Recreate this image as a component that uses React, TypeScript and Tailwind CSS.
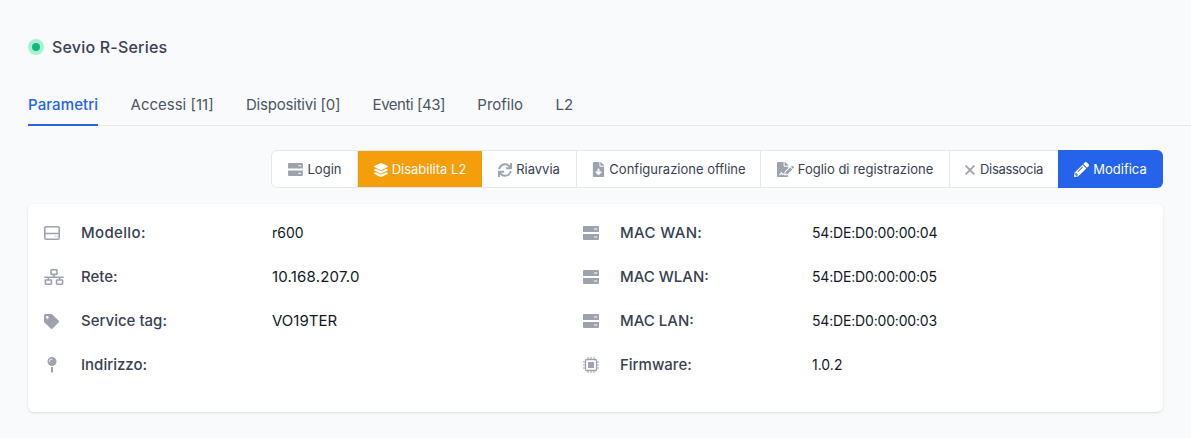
import React from 'react';
import { FaLayerGroup, FaSync, FaFileDownload, FaFileSignature, FaPencilAlt, FaTag, FaMapPin } from 'react-icons/fa';

const ServerIcon = ({ w = 16, h = 14 }: { w?: number; h?: number }) => (
  <svg width={w} height={h} viewBox="0 0 16 14" className="shrink-0 text-[#9ca3af]">
    <path fill="currentColor" d="M1 0h14a1 1 0 0 1 1 1v5H0V1a1 1 0 0 1 1-1zM0 8h16v5a1 1 0 0 1-1 1H1a1 1 0 0 1-1-1z" />
    <path fill="#fff" d="M11 2.5h3.2v1H11zM11 10.5h3.2v1H11z" />
  </svg>
);

const DriveIcon = () => (
  <svg width="16" height="14" viewBox="0 0 16 14" fill="none" className="text-[#9ca3af]">
    <rect x="0.8" y="0.8" width="14.4" height="12.4" rx="1.5" stroke="currentColor" strokeWidth="1.6" />
    <path d="M1 7.5h14" stroke="currentColor" strokeWidth="1.5" />
    <path d="M10.5 10.3h1M12.7 10.3h1" stroke="currentColor" strokeWidth="1" />
  </svg>
);

const NetworkIcon = () => (
  <svg width="20" height="16" viewBox="0 0 20 16" fill="none" stroke="currentColor" strokeWidth="1.6" className="text-[#9ca3af]">
    <rect x="7" y="0.8" width="6" height="4.6" rx="0.6" />
    <rect x="1.4" y="11" width="6" height="4.2" rx="0.6" />
    <rect x="12.6" y="11" width="6" height="4.2" rx="0.6" />
    <path d="M10 5.3v3M0.3 8.3h19.4M4.4 8.3V11M15.6 8.3V11" />
  </svg>
);

const ChipIcon = () => (
  <svg width="16" height="16" viewBox="0 0 16 16" fill="none" className="text-[#9ca3af]">
    <rect x="2.5" y="2.5" width="11" height="11" rx="1.2" stroke="currentColor" strokeWidth="1.3" />
    <rect x="5" y="5" width="6" height="6" fill="currentColor" />
    <path d="M5 0v2.5M8 0v2.5M11 0v2.5M5 13.5V16M8 13.5V16M11 13.5V16M0 5h2.5M0 8h2.5M0 11h2.5M13.5 5H16M13.5 8H16M13.5 11H16" stroke="currentColor" strokeWidth="1" />
  </svg>
);

const CloseIcon = () => (
  <svg width="10" height="10" viewBox="0 0 10 10" fill="none" stroke="currentColor" strokeWidth="1.8" className="text-[#9ca3af]">
    <path d="M0.6 0.6l8.8 8.8M9.4 0.6L0.6 9.4" />
  </svg>
);

const tabs = [
  { label: 'Parametri', cls: 'font-medium tracking-[0.1px] text-[#2563eb] border-b-2 border-[#2563eb]' },
  { label: 'Accessi [11]', cls: 'text-[#4b5563]' },
  { label: 'Dispositivi [0]', cls: 'tracking-[-0.2px] text-[#4b5563]' },
  { label: 'Eventi [43]', cls: 'tracking-[-0.45px] text-[#4b5563]' },
  { label: 'Profilo', cls: 'text-[#4b5563]' },
  { label: 'L2', cls: 'text-[#4b5563]' },
];

const macCls = 'text-sm tracking-[-0.18px]';

const leftRows = [
  { icon: <DriveIcon />, label: 'Modello:', labelCls: 'tracking-[0.35px]', value: 'r600', valueCls: 'text-sm' },
  { icon: <NetworkIcon />, label: 'Rete:', labelCls: '', value: '10.168.207.0', valueCls: 'text-[15px] tracking-[0.2px]' },
  { icon: <FaTag size={15} className="text-[#9ca3af]" />, label: 'Service tag:', labelCls: '', value: 'VO19TER', valueCls: 'text-[15px]' },
  { icon: <FaMapPin size={16} className="text-[#9ca3af]" />, label: 'Indirizzo:', labelCls: '', value: '', valueCls: '' },
];

const rightRows = [
  { icon: <ServerIcon />, label: 'MAC WAN:', labelCls: 'tracking-[0.35px]', value: '54:DE:D0:00:00:04', valueCls: macCls },
  { icon: <ServerIcon />, label: 'MAC WLAN:', labelCls: '', value: '54:DE:D0:00:00:05', valueCls: macCls },
  { icon: <ServerIcon />, label: 'MAC LAN:', labelCls: '', value: '54:DE:D0:00:00:03', valueCls: macCls },
  { icon: <ChipIcon />, label: 'Firmware:', labelCls: '', value: '1.0.2', valueCls: 'text-sm' },
];

const Row = ({ icon, label, labelCls, value, valueCls, labelWidth }: {
  icon: React.ReactNode; label: string; labelCls: string; value: string; valueCls: string; labelWidth: string;
}) => (
  <div className="flex h-11 items-center">
    <div className="flex w-[37px] justify-start">{icon}</div>
    <div className={`${labelWidth} text-[15px] font-medium text-[#374151] ${labelCls}`}>{label}</div>
    <div className={`text-[#111827] ${valueCls}`}>{value}</div>
  </div>
);

const btn = 'flex items-center justify-center border-r border-[#e5e7eb] pt-px';

const App = () => {
  return (
    <div className="h-[438px] overflow-hidden bg-[#f9fafb] px-7 font-['Inter',sans-serif]">
      <div className="flex h-[94px] items-center gap-2">
        <span className="flex h-4 w-4 items-center justify-center rounded-full bg-[#a7f3d0]">
          <span className="h-2 w-2 rounded-full bg-[#10b981]" />
        </span>
        <h1 className="text-base font-medium tracking-[0.2px] text-[#374151]">Sevio R-Series</h1>
      </div>

      <div className="-mr-7 flex h-8 gap-[32.3px] border-b border-[#e5e7eb]">
        {tabs.map((t) => (
          <div key={t.label} className={`h-8 pt-px text-[15px] leading-5 ${t.cls}`}>
            {t.label}
          </div>
        ))}
      </div>

      <div className="mt-6 flex justify-end">
        <div className="flex h-[38px] rounded-md border border-[#e5e7eb] bg-white text-[13px] text-[#374151]">
          <button className={`${btn} w-[86px] gap-[5px]`}>
            <ServerIcon w={15} h={13} /> Login
          </button>
          <button className="flex w-[124px] items-center justify-center gap-1 bg-[#f59e0b] pt-px text-white">
            <FaLayerGroup size={14} /> Disabilita L2
          </button>
          <button className={`${btn} w-[95px] gap-1`}>
            <FaSync size={14} className="text-[#9ca3af]" /> Riavvia
          </button>
          <button className={`${btn} w-[184px] gap-[3px]`}>
            <FaFileDownload size={15} className="text-[#9ca3af]" /> Configurazione offline
          </button>
          <button className={`${btn} w-[189px] gap-1`}>
            <FaFileSignature size={17} className="text-[#9ca3af]" /> Foglio di registrazione
          </button>
          <button className="flex w-[108px] items-center justify-center gap-[5px] pt-px tracking-[-0.3px]">
            <CloseIcon /> Disassocia
          </button>
          <button className="-my-px -mr-px flex w-[105px] items-center justify-center gap-1 rounded-r-md bg-[#2563eb] pt-px text-white">
            <FaPencilAlt size={15} /> Modifica
          </button>
        </div>
      </div>

      <div className="mt-4 flex h-[208px] rounded-md bg-white px-4 py-[7px] shadow">
        <div className="w-[539px]">
          {leftRows.map((r) => (
            <Row key={r.label} {...r} labelWidth="w-[191px]" />
          ))}
        </div>
        <div>
          {rightRows.map((r) => (
            <Row key={r.label} {...r} labelWidth="w-[192px]" />
          ))}
        </div>
      </div>
    </div>
  );
};

export default App;
